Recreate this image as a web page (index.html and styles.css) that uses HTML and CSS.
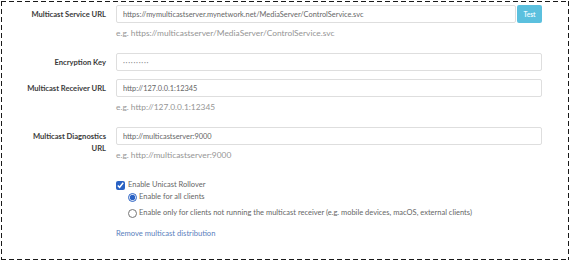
FILE: index.html
```html
<!DOCTYPE html>
<html>
<head>
<meta charset="UTF-8">
<title>Multicast Distribution</title>
<link rel="stylesheet" href="styles.css">
</head>
<body>
	<div class="panel">
		<form class="settings">
			<div class="row">
				<label class="fieldLabel">Multicast Service URL</label>
				<div class="control">
					<div class="inputGroup">
						<input type="text" class="dataField" value="https://mymulticastserver.mynetwork.net/MediaServer/ControlService.svc">
						<button type="button" class="testButton">Test</button>
					</div>
					<div class="help">e.g. https://multicastserver/MediaServer/ControlService.svc</div>
				</div>
			</div>
			<div class="row">
				<label class="fieldLabel">Encryption Key</label>
				<div class="control">
					<input type="text" class="dataField keyField" value="··········">
				</div>
			</div>
			<div class="row">
				<label class="fieldLabel">Multicast Receiver URL</label>
				<div class="control">
					<input type="text" class="dataField" value="http://127.0.0.1:12345">
					<div class="help">e.g. http://127.0.0.1:12345</div>
				</div>
			</div>
			<div class="row">
				<label class="fieldLabel">Multicast Diagnostics URL</label>
				<div class="control">
					<input type="text" class="dataField" value="http://multicastserver:9000">
					<div class="help">e.g. http://multicastserver:9000</div>
				</div>
			</div>
			<div class="row">
				<div></div>
				<div class="control options">
					<label class="check"><input type="checkbox" checked> Enable Unicast Rollover</label>
					<div class="radios">
						<label class="radio"><input type="radio" name="rollover" checked> Enable for all clients</label>
						<label class="radio"><input type="radio" name="rollover"> Enable only for clients not running the multicast receiver (e.g. mobile devices, macOS, external clients)</label>
					</div>
					<a href="#" class="removeLink">Remove multicast distribution</a>
				</div>
			</div>
		</form>
	</div>
</body>
</html>
```
FILE: styles.css
```css
*{
	box-sizing: border-box;
	font-family: 'Lato', sans-serif;
}
body{
	margin: 0;
	background: white;
}
/* dashed frame: 5px dashes, 3px gaps */
.panel{
	margin: 1px;
	height: 259px;
	padding: 4px 1px 0;
	background:
		repeating-linear-gradient(to right, #1a1a1a 0 5px, transparent 5px 8px) top left / 100% 1px no-repeat,
		repeating-linear-gradient(to right, #1a1a1a 0 5px, transparent 5px 8px) bottom left / 100% 1px no-repeat,
		repeating-linear-gradient(to bottom, #1a1a1a 0 5px, transparent 5px 8px) top left / 1px 100% no-repeat,
		repeating-linear-gradient(to bottom, #1a1a1a 0 5px, transparent 5px 8px) top right / 1px 100% no-repeat;
}
.row{
	display: grid;
	grid-template-columns: 104px 426px;
	column-gap: 10px;
	margin-bottom: 8px;
}
.fieldLabel{
	text-align: right;
	font-size: 7.6px;
	font-weight: bold;
	color: #3a3a3a;
	line-height: 12px;
	padding-top: 3px;
	padding-left: 24px;
}
.inputGroup{
	display: flex;
	gap: 1px;
}
.dataField{
	display: block;
	width: 100%;
	height: 18px;
	border: 1px solid #dedede;
	border-radius: 2px;
	padding: 0 6px;
	font-size: 7.4px;
	color: #666;
	background: white;
}
.dataField:focus{
	outline: none
}
.keyField{
	letter-spacing: 0.7px;
	color: #888;
}
.testButton{
	width: 25px;
	flex: none;
	border: none;
	border-radius: 2px;
	background: #5bc0de;
	color: #eafaff;
	font-size: 6.5px;
	font-weight: bold;
	padding: 0;
}
.help{
	margin: 4px 0 6px;
	font-size: 8.4px;
	line-height: 12px;
	color: #959595;
}
.options{
	padding-top: 4px;
	font-size: 7.5px;
	color: #666;
}
.check, .radio{
	display: flex;
	align-items: center;
	line-height: 12px;
}
.check input{
	width: 9px;
	height: 9px;
	margin: 0 3px 0 0;
	accent-color: #2a62c4;
}
.radios{
	padding-left: 12px;
}
.radio{
	margin-bottom: 4px;
}
.radio input{
	width: 9px;
	height: 9px;
	margin: 0 2px 0 0;
	accent-color: #2a62c4;
}
.removeLink{
	display: inline-block;
	margin-top: 5px;
	font-size: 7.6px;
	color: #5a80bd;
	text-decoration: none;
}
```
